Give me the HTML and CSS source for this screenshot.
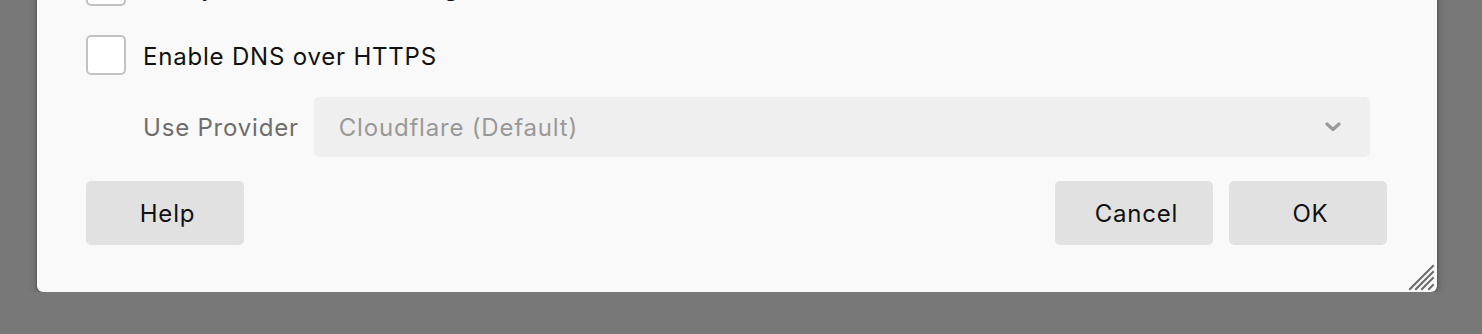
FILE: index.html
```html
<!DOCTYPE html>
<html lang="en">

<head>
    <meta charset="UTF-8">
    <meta name="viewport" content="width=device-width, initial-scale=1.0">
    <title>Network Settings</title>
    <link rel="stylesheet" href="styles.css">
</head>

<body>
    <div class="dialog">
        <label class="check-row">
            <span class="checkbox"></span>
            <span class="check-label">Always use secure settings</span>
        </label>

        <label class="check-row">
            <span class="checkbox"></span>
            <span class="check-label">Enable DNS over HTTPS</span>
        </label>

        <div class="provider-row">
            <span class="provider-label">Use Provider</span>
            <div class="select">
                <span class="select-value">Cloudflare (Default)</span>
                <svg class="chevron" width="16" height="10" viewBox="0 0 16 10">
                    <path d="M2 2 L8 7.5 L14 2" fill="none" stroke="#9a9a9a" stroke-width="3.2" stroke-linecap="round" stroke-linejoin="round"/>
                </svg>
            </div>
        </div>

        <div class="button-row">
            <button class="btn">Help</button>
            <div class="button-group">
                <button class="btn">Cancel</button>
                <button class="btn">OK</button>
            </div>
        </div>

        <svg class="grip" width="28" height="28" viewBox="0 0 28 28">
            <g stroke="#6a6a6a" stroke-width="2" stroke-linecap="square">
                <line x1="3" y1="26" x2="26" y2="3"/>
                <line x1="9" y1="26" x2="26" y2="9"/>
                <line x1="15" y1="26" x2="26" y2="15"/>
                <line x1="22" y1="26" x2="26" y2="22"/>
            </g>
        </svg>
    </div>
</body>

</html>
```

FILE: styles.css
```css
body {
    margin: 0;
    background-color: #787878;
    font-family: 'Inter', 'Liberation Sans', sans-serif;
    font-size: 24px;
    letter-spacing: 0.8px;
    overflow: hidden;
}

.dialog {
    position: relative;
    box-sizing: border-box;
    width: 1400px;
    margin: -46px 0 0 37px;
    padding: 12px 50px 47px 49px;
    background-color: #f9f9f9;
    border-radius: 0 0 6px 6px;
    box-shadow: 0 0 2px rgba(0, 0, 0, 0.45), 0 3px 10px rgba(0, 0, 0, 0.25);
}

.check-row {
    display: flex;
    align-items: center;
    gap: 17px;
    height: 40px;
    margin-bottom: 29px;
    color: #111;
}

.check-row + .check-row {
    margin-bottom: 22px;
}

.checkbox {
    box-sizing: border-box;
    width: 40px;
    height: 40px;
    background-color: #fff;
    border: 2px solid #c2c2c2;
    border-radius: 5px;
}

.check-label {
    position: relative;
    top: 1px;
}

.provider-row {
    display: flex;
    align-items: center;
    gap: 15px;
    margin: 0 17px 24px 57px;
}

.provider-label {
    color: #6e6e6e;
}

.select {
    flex: 1;
    display: flex;
    align-items: center;
    justify-content: space-between;
    height: 60px;
    padding: 0 29px 0 25px;
    background-color: #efefef;
    border-radius: 5px;
}

.select-value {
    color: #999;
}

.chevron {
    display: block;
}

.button-row {
    display: flex;
    justify-content: space-between;
}

.button-group {
    display: flex;
    gap: 16px;
}

.btn {
    width: 158px;
    height: 64px;
    padding: 0 0 0 5px;
    border: none;
    border-radius: 5px;
    background-color: #e1e1e1;
    color: #111;
    font-family: inherit;
    font-size: 24px;
    letter-spacing: inherit;
}

.grip {
    position: absolute;
    right: 2px;
    bottom: 1px;
}
```
